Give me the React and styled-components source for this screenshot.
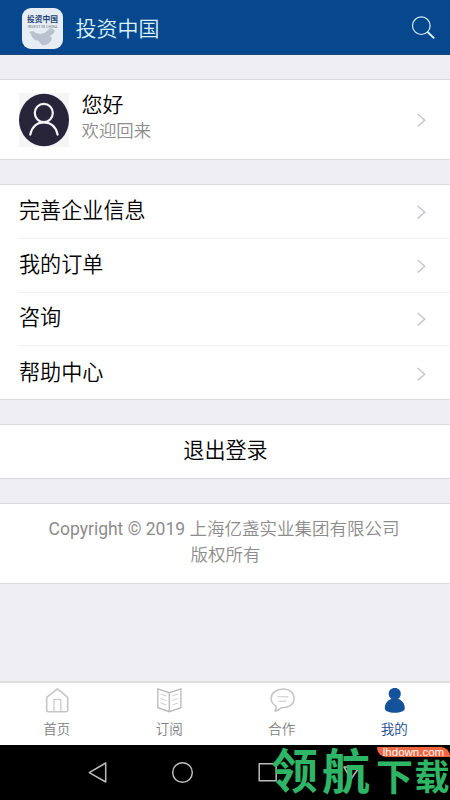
import React from "react"
import styled, { createGlobalStyle } from "styled-components"

const menuItems = ["完善企业信息", "我的订单", "咨询", "帮助中心"]

const tabs = [
    { label: "首页", icon: HomeIcon },
    { label: "订阅", icon: BookIcon },
    { label: "合作", icon: ChatIcon },
    { label: "我的", icon: UserIcon, active: true },
]

function App() {
    return (
        <Screen>
            <GlobalStyle />
            <Header>
                <Logo>
                    <LogoMap />
                    <LogoTitle>投资中国</LogoTitle>
                    <LogoCaption>INVEST IN CHINA</LogoCaption>
                </Logo>
                <HeaderTitle>投资中国</HeaderTitle>
                <SearchIcon />
            </Header>
            <Content>
                <Profile>
                    <Avatar />
                    <Greeting>
                        <Name>您好</Name>
                        <Welcome>欢迎回来</Welcome>
                    </Greeting>
                    <Chevron />
                </Profile>
                <Menu>
                    {menuItems.map((item) => (
                        <MenuRow key={item}>
                            <MenuLabel>{item}</MenuLabel>
                            <Chevron />
                        </MenuRow>
                    ))}
                </Menu>
                <Logout>退出登录</Logout>
                <Copyright>
                    <Company>
                        <Latin>Copyright © 2019 </Latin>上海亿盏实业集团有限公司
                    </Company>
                    <span>版权所有</span>
                </Copyright>
            </Content>
            <TabBar>
                {tabs.map(({ label, icon: Icon, active }) => (
                    <Tab key={label} $active={active}>
                        <Icon />
                        <span>{label}</span>
                    </Tab>
                ))}
            </TabBar>
            <SystemBar>
                <SystemIcons />
                <Watermark>
                    <Glyph $left={-1} $top={-1} $size={47}>领</Glyph>
                    <Glyph $left={50} $top={-1} $size={48}>航</Glyph>
                    <Glyph $left={104} $top={12} $size={37}>下</Glyph>
                    <Glyph $left={142.5} $top={12} $size={35}>载</Glyph>
                    <Site>lhdown.com</Site>
                </Watermark>
            </SystemBar>
        </Screen>
    )
}

export default App

function LogoMap() {
    return (
        <MapSvg width="30" height="20" viewBox="0 0 30 20">
            <path
                d="M1 5 5 4 8 6 12 7 16 6 19 4 22 1 25 2 27 4 25 7 22 9 24 11 23 14 20 17 17 18 14 18 12 16 11 14 7 13 4 10 3 7Z"
                fill="#b9c2ce"
            />
        </MapSvg>
    )
}

function SearchIcon() {
    return (
        <svg width="26" height="26" viewBox="0 0 26 26" fill="none" stroke="#d9f1ff">
            <circle cx="10.3" cy="10.7" r="8.8" strokeWidth="1.2" />
            <path d="m16.6 17 6.6 6.4" strokeWidth="2" />
        </svg>
    )
}

function Avatar() {
    return (
        <AvatarSvg width="50" height="54" viewBox="0 0 50 54" fill="none">
            <path d="M0 0h50v54H0z" fill="#f5f5f5" />
            <ellipse cx="25" cy="27" rx="25" ry="26.2" fill="#28243a" />
            <g stroke="#f4f4f6" strokeWidth="2.2" strokeLinecap="round">
                <ellipse cx="24.8" cy="20" rx="9" ry="9.2" />
                <path d="M11.3 41.6C12.8 33.6 18 29.3 24.8 29.3S37 33.6 38.6 41.6" />
            </g>
        </AvatarSvg>
    )
}

function Chevron() {
    return (
        <svg width="10" height="16" viewBox="0 0 10 16" fill="none" stroke="#c7c7cc" strokeWidth="1.5">
            <path d="m1.7 2 7 6.2-7 6.2" />
        </svg>
    )
}

function HomeIcon() {
    return (
        <svg width="28" height="28" viewBox="0 0 28 28" fill="none" stroke="#c6c6c6" strokeWidth="1.6" strokeLinejoin="round">
            <path d="M3.7 10.4 14.4 1.9 24.7 10.4V23.6q0 1.2-1.2 1.2H4.9q-1.2 0-1.2-1.2Z" />
            <path d="M11 24.4v-12h6.8v12" strokeWidth="1.2" />
        </svg>
    )
}

function BookIcon() {
    return (
        <svg width="28" height="28" viewBox="0 0 28 28" fill="none" stroke="#b9b9b9" strokeWidth="1.3">
            <path d="M2.8 1.8 14.3 5.7 25.9 1.8V20.7L14.3 24.7 2.8 20.7ZM14.3 5.7V24.7" />
            <path
                d="m5.6 7 5.7 2M5.6 11.5l5.7 2M5.6 16l5.7 2M17.3 9l5.6-2M17.3 13.5l5.6-2M17.3 18l5.6-2"
                stroke="#cdcdcd"
                strokeWidth="1"
            />
        </svg>
    )
}

function ChatIcon() {
    return (
        <svg width="28" height="28" viewBox="0 0 28 28" fill="none" stroke="#c6c6c6" strokeWidth="1.6" strokeLinejoin="round">
            <path d="M15 2C8.4 2 3.2 6 3.2 11.4c0 3.6 1.7 6 4.9 7.7.3 1.9-.2 3.5-1.2 5 2.9-.4 4.9-1.6 6.3-3.4C21 21.3 26 17.2 26 11.4 26 6 21.6 2 15 2Z" />
            <path d="M9.4 9.8h11M10.8 14.2h7.4" strokeWidth="1.1" />
        </svg>
    )
}

function UserIcon() {
    return (
        <svg width="28" height="28" viewBox="0 0 28 28" fill="#14539c">
            <path d="M14.8 1c-3.7 0-6.1 2.5-6.1 5.8 0 2.3 1 4 2.7 5C7.6 13.2 4.8 16.8 4.8 21.2c0 2.9 4.1 4.5 10 4.5s10-1.6 10-4.5c0-4.4-2.7-8-6.6-9.4 1.7-1 2.6-2.7 2.6-5 0-3.3-2.3-5.8-6-5.8Z" />
        </svg>
    )
}

function SystemIcons() {
    return (
        <svg width="450" height="55" viewBox="0 0 450 55" fill="none" stroke="#bcbcbc" strokeWidth="1.5" strokeLinejoin="round">
            <path d="M105.7 18v19L89.3 27.6Z" />
            <circle cx="182.5" cy="27.5" r="9.8" />
            <rect x="259.2" y="18.8" width="17" height="17" />
            <path d="M344 22h15.5L351 34Z" />
        </svg>
    )
}

const GlobalStyle = createGlobalStyle`
  * {
    box-sizing: border-box;
  }
  body {
    margin: 0;
    font-family: Roboto, "Noto Sans CJK SC", sans-serif;
    color: #000;
  }
  svg {
    display: block;
    flex-shrink: 0;
  }
`

const Screen = styled.div`
  display: flex;
  flex-direction: column;
  width: 450px;
  height: 800px;
  overflow: hidden;
  background: #eeeef3;
`

const Header = styled.header`
  display: flex;
  align-items: center;
  height: 55px;
  padding: 2px 13px 0 22px;
  background: #06478d;
  border-bottom: 1px solid #1b4679;
`

const Logo = styled.div`
  position: relative;
  width: 41px;
  height: 41px;
  padding-top: 7px;
  border-radius: 9px;
  background: #e6edf5;
  text-align: center;
  overflow: hidden;
`

const MapSvg = styled.svg`
  position: absolute;
  left: 6px;
  top: 19px;
`

const LogoTitle = styled.div`
  font-size: 7.7px;
  font-weight: 700;
  line-height: 10px;
  color: #234476;
`

const LogoCaption = styled.div`
  position: relative;
  font-size: 3.6px;
  line-height: 5px;
  letter-spacing: 0.1px;
  color: #737680;
`

const HeaderTitle = styled.h1`
  flex: 1;
  margin: 1px 0 0 12.5px;
  font-size: 21px;
  font-weight: 350;
  line-height: 30px;
  color: #d9f3ff;
`

const Content = styled.main`
  flex: 1;
  display: flex;
  flex-direction: column;
  gap: 24px;
  padding-top: 24px;
`

const Card = styled.section`
  background: #fff;
  border: solid #d9d9dc;
  border-width: 1px 0;
  font-weight: 350;
`

const Profile = styled(Card)`
  display: flex;
  align-items: center;
  height: 81px;
  padding: 0 24px 0 19px;
`

const AvatarSvg = styled.svg`
  margin-top: 1px;
`

const Greeting = styled.div`
  flex: 1;
  margin: -3px 0 0 12.5px;
`

const Name = styled.div`
  font-size: 21px;
  line-height: 27px;
`

const Welcome = styled.div`
  font-size: 17.4px;
  line-height: 25px;
  color: #8c8c8c;
`

const Menu = styled(Card)`
  height: 216px;
  padding-left: 19px;
`

const MenuRow = styled.div`
  display: flex;
  align-items: center;
  justify-content: space-between;
  height: 53.8px;
  padding: 1px 24px 0 0;

  &:not(:last-child) {
    border-bottom: 1px solid #f0f0f0;
  }
`

const MenuLabel = styled.span`
  margin-top: -2px;
  font-size: 21.1px;
  line-height: 30px;
`

const Logout = styled(Card)`
  height: 55px;
  padding-left: 1px;
  font-size: 21.1px;
  line-height: 51px;
  text-align: center;
`

const Copyright = styled(Card)`
  display: flex;
  flex-direction: column;
  align-items: center;
  height: 81px;
  padding: 12px 0 0 1px;
  font-size: 17.5px;
  line-height: 26px;
  color: #8c8c8c;
`

const Company = styled.span`
  padding-right: 3px;
`

const Latin = styled.span`
  font-weight: 400;
`

const TabBar = styled.nav`
  display: grid;
  grid-template-columns: repeat(4, 1fr);
  height: 64px;
  border-top: 2px solid #dededf;
  background: #fff;
`

const Tab = styled.div`
  display: flex;
  flex-direction: column;
  align-items: center;
  gap: 4px;
  padding: 4px 0 0 1px;
  font-size: 13.5px;
  font-weight: 350;
  line-height: 20px;
  color: ${({ $active }) => ($active ? "#14488a" : "#808080")};
`

const SystemBar = styled.footer`
  position: relative;
  height: 55px;
  background: #000;
`

const Watermark = styled.div`
  position: absolute;
  left: 272px;
  top: 0;
  width: 178px;
  height: 55px;
`

const Glyph = styled.span`
  position: absolute;
  left: ${({ $left }) => $left}px;
  top: ${({ $top }) => $top}px;
  font-family: "Noto Sans CJK SC", sans-serif;
  font-size: ${({ $size }) => $size}px;
  font-weight: 700;
  line-height: 1;
  color: #2fb566;
`

const Site = styled.span`
  position: absolute;
  left: 105px;
  top: 2px;
  width: 73px;
  height: 10px;
  border-radius: 1px 9px 0 9px;
  background: #f2653f;
  font: 11.5px/10px "Liberation Sans", sans-serif;
  text-align: center;
  color: #fff;
`
